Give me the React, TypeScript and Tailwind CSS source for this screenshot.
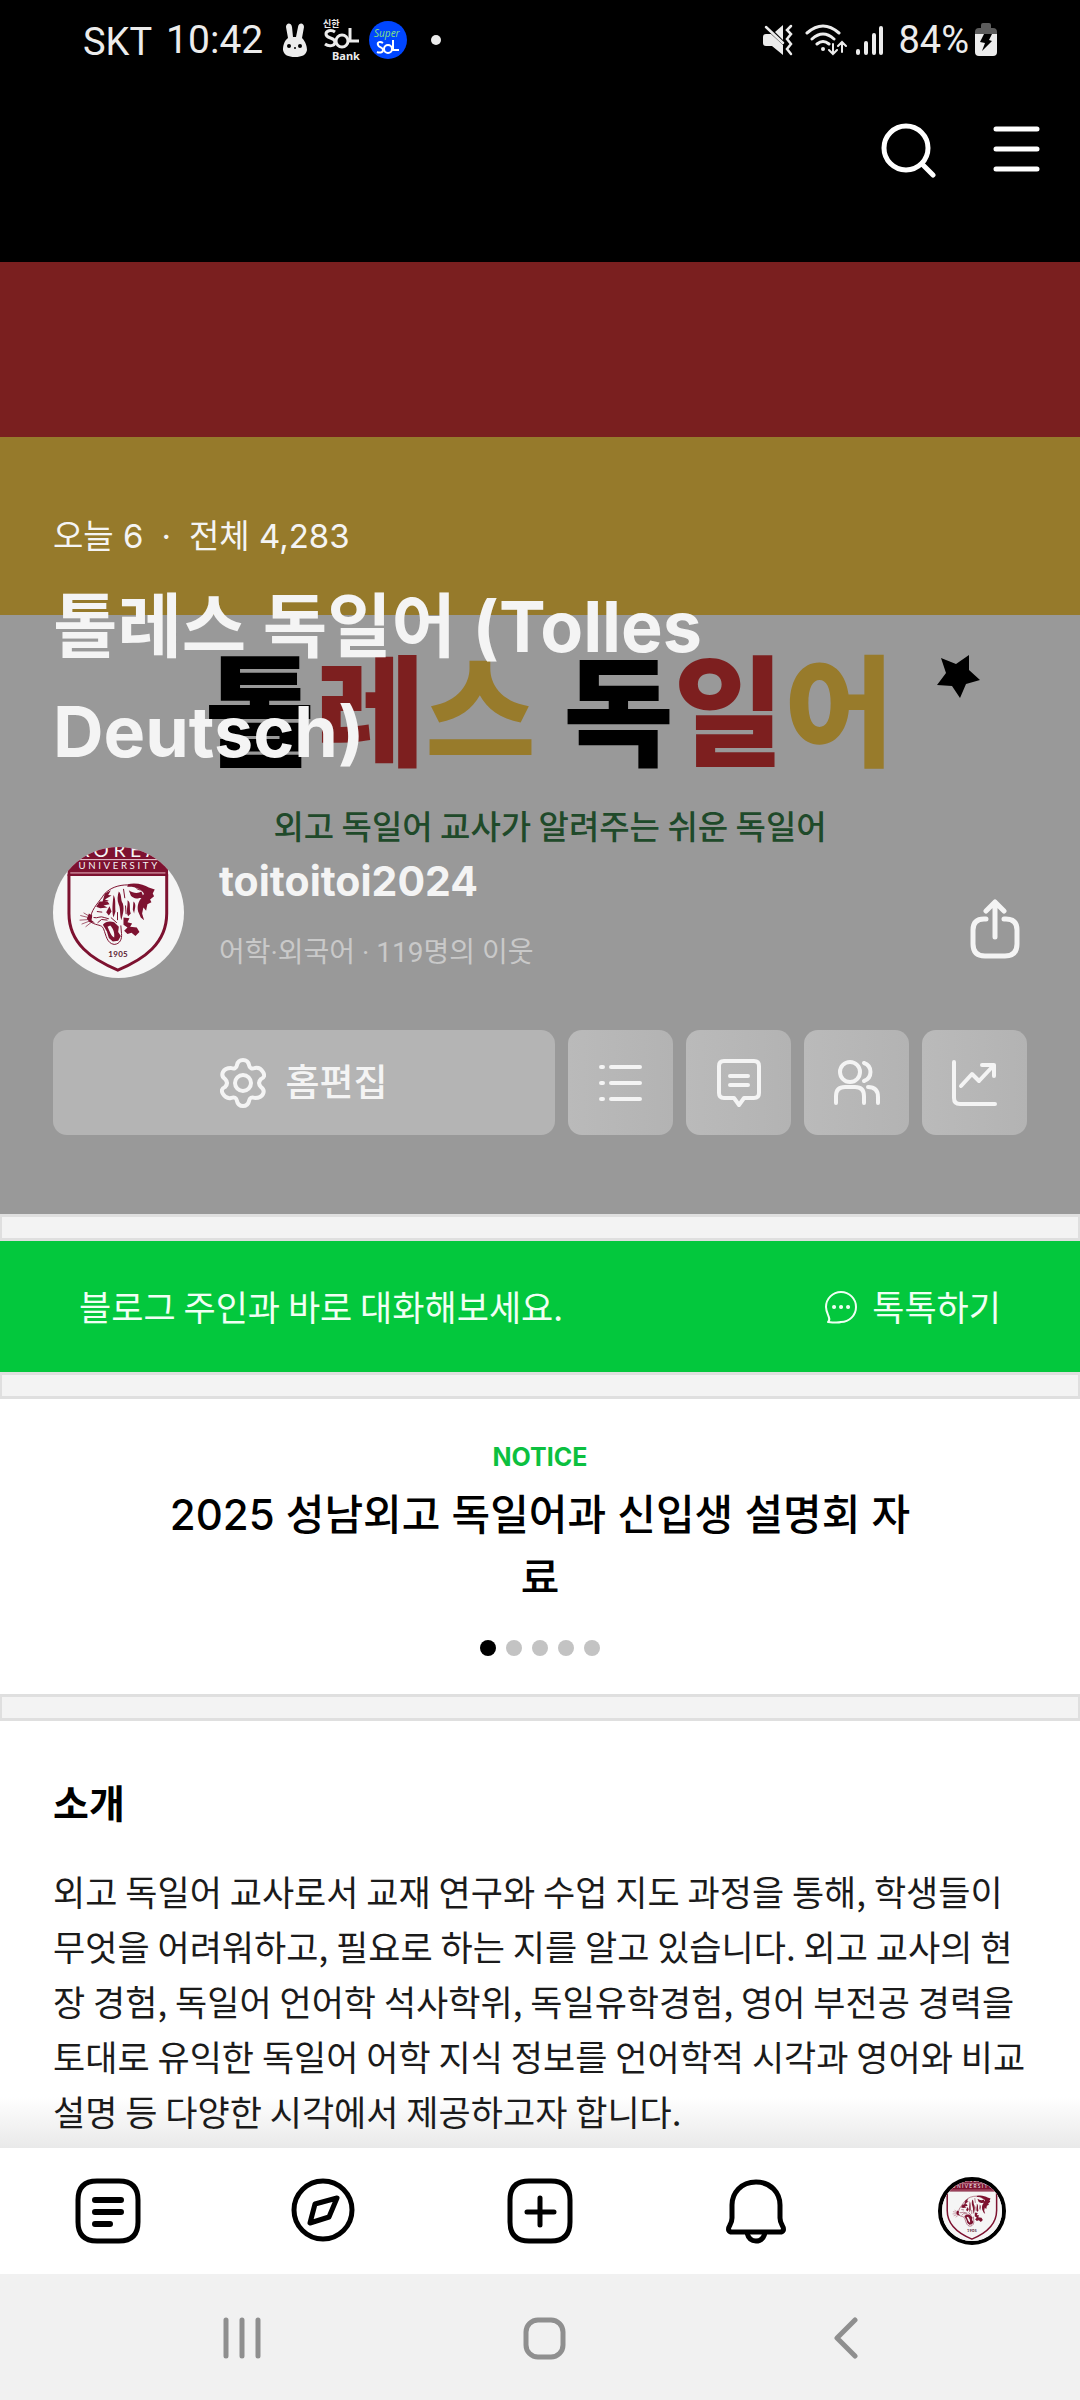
import type { ReactNode } from 'react'

const FONT = "font-[Inter,'Noto_Sans_CJK_KR',sans-serif]"
const KR_FONT = "font-['Noto_Sans_CJK_KR',sans-serif]"
const META_FONT = "font-[Roboto,'Noto_Sans_CJK_KR',sans-serif]"
const STATUS_FONT = 'font-[Roboto,sans-serif]'

interface IconProps {
  width: number
  height: number
  stroke?: number
  children: ReactNode
}

function Icon({ width, height, stroke = 4, children }: IconProps) {
  return (
    <svg
      width={width}
      height={height}
      viewBox={`0 0 ${width} ${height}`}
      fill="none"
      stroke="currentColor"
      strokeWidth={stroke}
      strokeLinecap="round"
      strokeLinejoin="round"
      className="shrink-0"
      aria-hidden="true"
    >
      {children}
    </svg>
  )
}

function Crest({ className, viewBox }: { className: string; viewBox: string }) {
  return (
    <svg viewBox={viewBox} className={className} role="img" aria-label="Korea University">
      <rect x="90" y="40" width="410" height="410" fill="#f5f5f5" />
      <path d="M142 40H444V137H142Z" fill="#7d1230" />
      <text x="300" y="80" textAnchor="middle" fontFamily="Lato" fontSize="58" letterSpacing="14" fill="#f5f5f5">
        KOREA
      </text>
      <path d="M150 88H436" stroke="#f0d5dc" strokeWidth="3" />
      <text x="297" y="117" textAnchor="middle" fontFamily="Lato" fontSize="29" letterSpacing="8" fill="#f5f5f5">
        UNIVERSITY
      </text>
      <path d="M150 128H436" stroke="#e9b9c5" strokeWidth="3" />
      <path d="M146 132V250C146 340 215 388 293 420C371 388 440 340 440 250V132" fill="none" stroke="#7d1230" strokeWidth="9" />
      <g fill="#7d1230">
        <path d="M322 162C350 156 372 164 386 172L404 178L398 190L402 198L390 208L394 216L382 222L378 242L370 232L366 250L372 270L362 262L354 244C350 226 356 212 364 204L352 202L372 192C366 176 342 168 322 170Z" />
        <path d="M326 180C340 190 354 190 364 184L368 194C356 210 340 206 332 196Z" />
        <path d="M296 184C306 194 300 208 308 220C314 240 306 258 304 270C298 256 302 236 296 224C290 210 292 196 296 184Z" />
        <path d="M280 194C288 206 284 228 286 244L280 262C274 242 278 214 280 194Z" />
        <path d="M322 210C334 216 326 236 332 250L324 258C316 244 324 226 322 210Z" />
        <path d="M340 214C350 222 344 236 342 250L338 238Z" />
        <path d="M254 190L272 180L264 194L274 196L254 208L266 212L246 218Z" />
        <path d="M238 214L262 214L268 222L250 226L262 232L240 234L228 230Z" />
        <path d="M268 228L274 244L266 256L258 246Z" />
        <path d="M310 262L328 264L322 276L336 280L330 290L350 292L358 306L346 318L334 308L322 312L312 302L322 292L310 284Z" />
        <path d="M248 284C256 274 268 272 282 276L296 290L294 306L302 318L294 332L278 334L266 324L260 304Z" />
        <path d="M206 250L216 256L214 270L224 278L208 276L200 266Z" />
      </g>
      <path d="M262 290C268 302 272 318 282 322C284 306 278 294 270 286Z" fill="#f5f5f5" />
      <g fill="none" stroke="#7d1230" strokeWidth="3">
        <path d="M212 258C216 234 238 214 252 192C270 172 296 164 322 164" />
        <path d="M212 276C232 288 244 282 250 296C258 316 260 340 282 343C300 342 306 326 304 310L302 286" />
        <path d="M220 262C232 266 240 256 252 262L266 266M230 244L246 246M232 278L244 268L262 270" />
        <path d="M212 264L180 256M210 268L178 270M210 272L184 282M214 262L190 248M214 276L196 290" strokeWidth="2" />
        <path d="M310 176L314 204M346 170C352 180 362 180 370 178M316 226L318 252M292 246L292 270M272 262L290 278" />
      </g>
      <text x="294" y="380" textAnchor="middle" fontFamily="Lato" fontWeight="700" fontSize="24" letterSpacing="1" fill="#5a2030">
        1905
      </text>
    </svg>
  )
}

function StatusBar() {
  return (
    <div className={`flex h-20 items-center justify-between px-[83px] text-[38px] text-[#ececec] ${STATUS_FONT}`}>
      <div className="flex items-center">
        <span className="pt-1">SKT</span>
        <span className="ml-[14px] text-[39px]">10:42</span>
        <svg width="24" height="34" viewBox="0 0 24 34" className="ml-5" aria-hidden="true">
          <path
            fill="currentColor"
            d="M3 4C3 0 8-1 9 4L10 14H13L15 4C16-1 21 0 21 4L19 15C23 19 24 24 24 27C23 32 19 34 12 34S1 32 0 27C0 23 1 18 5 15Z"
          />
          <circle cx="6" cy="23" r="2" />
          <circle cx="17" cy="23" r="2" />
          <circle cx="12" cy="25" r="1" />
        </svg>
        <svg width="40" height="44" viewBox="0 0 40 44" className="ml-4 overflow-visible" role="img" aria-label="신한 SOL Bank">
          <text x="0" y="9" fontFamily="Noto Sans CJK KR" fontWeight="700" fontSize="9" fill="#ececec">신한</text>
          <g fill="none" stroke="#ececec" strokeWidth="3">
            <path d="M12 14C8 11 3 13 3 16C3 21 12 19 12 24C12 28 6 29 2 26" />
            <circle cx="19" cy="23" r="6" />
            <path d="M27 10V23H36" />
          </g>
          <text x="9" y="42" fontFamily="Noto Sans" fontWeight="700" fontSize="11" fill="#ececec">Bank</text>
        </svg>
        <svg width="38" height="38" viewBox="0 0 38 38" className="ml-[6px]" role="img" aria-label="Super SOL">
          <circle cx="19" cy="19" r="19" fill="#0046ff" />
          <text x="5" y="16" fontFamily="Noto Sans" fontStyle="italic" fontSize="10" fill="#7ddc8a">Super</text>
          <g fill="none" stroke="#fff" strokeWidth="2">
            <path d="M14 22C11 20 8 21 9 24C10 27 14 26 14 29C14 32 10 32 8 31" />
            <circle cx="19" cy="28" r="4" />
            <path d="M24 19V29H30" />
          </g>
        </svg>
        <span className="ml-6 size-[10px] rounded-full bg-[#ececec]" />
      </div>
      <div className="flex items-center">
        <svg width="30" height="32" viewBox="0 0 30 32" aria-hidden="true">
          <path fill="currentColor" d="M0 13Q0 10 3 10H8L20 21V31L9 22H3Q0 22 0 19ZM12 8L20 1V16Z" />
          <path fill="none" stroke="currentColor" strokeWidth="2.5" strokeLinecap="round" d="M3 3L20 19M28 2L24 6L28 10L24 15L28 20L24 25L28 30" />
        </svg>
        <svg width="42" height="32" viewBox="0 0 42 32" className="ml-3" aria-hidden="true">
          <g fill="none" stroke="currentColor" strokeWidth="3" strokeLinecap="round">
            <path d="M2 9Q18-5 34 9M7 15Q18 5 29 15M12 20Q18 15 24 20" />
            <path strokeWidth="2" d="M28 20V30M24 26L28 30L32 26M37 28V18M33 22L37 18L41 22" />
          </g>
          <circle cx="18" cy="25" r="2" fill="currentColor" />
        </svg>
        <svg width="29" height="30" viewBox="0 0 29 30" className="ml-2" aria-hidden="true">
          <path stroke="currentColor" strokeWidth="4" strokeLinecap="round" d="M3 26V28M11 18V28M19 10V28M26 3V28" />
        </svg>
        <span className="ml-[14px]">84%</span>
        <svg width="22" height="34" viewBox="0 0 22 34" className="ml-[6px]" aria-hidden="true">
          <path fill="#5c5c5c" d="M6 5V2Q6 0 8 0H14Q16 0 16 2V5H18Q22 5 22 9V12H0V9Q0 5 4 5Z" />
          <path fill="currentColor" d="M0 11H22V29Q22 33 18 33H4Q0 33 0 29Z" />
          <path fill="#000" d="M9 11H17L14 17L17 18L7 28L10 20L5 19Z" />
        </svg>
      </div>
    </div>
  )
}

function CoverBackdrop() {
  return (
    <div className={`absolute inset-0 flex flex-col ${KR_FONT}`} aria-hidden="true">
      <div className="h-[262px] bg-black" />
      <div className="h-[175px] bg-[#7a1f1f]" />
      <div className="h-[178px] bg-[#967a2b]" />
      <div className="flex flex-1 flex-col items-center bg-[#999999] pt-7">
        <div className="flex items-start">
          <p className="ml-[106px] text-[120px] leading-[124px] font-black whitespace-nowrap text-black">
            톨<span className="text-[#7d1f1f]">레</span>
            <span className="text-[#987b2b]">스</span> 독<span className="text-[#7d1f1f]">일</span>
            <span className="text-[#987b2b]">어</span>
          </p>
          <svg width="44" height="44" viewBox="0 0 44 44" className="mt-3 ml-[43px]">
            <path d="M4 3L19 9L32 0L32 15L43 25L29 29L23 43L15 31L0 30L9 18Z" />
          </svg>
        </div>
        <p className="mt-[34px] ml-5 text-[33px] leading-[48px] font-medium text-[#1f4a2a]">
          외고 독일어 교사가 알려주는 쉬운 독일어
        </p>
      </div>
    </div>
  )
}

const coverActions = [
  {
    label: '목록',
    icon: (
      <Icon width={44} height={48}>
        <path d="M2 8H4M12 8H41M2 24H4M12 24H41M2 40H4M12 40H41" />
      </Icon>
    ),
  },
  {
    label: '안부글',
    icon: (
      <Icon width={44} height={48}>
        <path d="M7 2H37Q42 2 42 7V34Q42 39 37 39H27L22 46L17 39H7Q2 39 2 34V7Q2 2 7 2ZM13 17H31M13 26H31" />
      </Icon>
    ),
  },
  {
    label: '이웃',
    icon: (
      <Icon width={46} height={46}>
        <circle cx="16" cy="12" r="10" />
        <path d="M2 43V36Q2 27 11 27H21Q30 27 30 36V43M30 3A9.500 9.500 0 0 1 30 21M34 27Q44 27 44 37V43" />
      </Icon>
    ),
  },
  {
    label: '통계',
    icon: (
      <Icon width={46} height={48}>
        <path d="M2 3V39Q2 45 8 45H43M9 27L20 15L27 22L42 6M30 6H42V17" />
      </Icon>
    ),
  },
]

function Cover() {
  return (
    <section className="relative">
      <CoverBackdrop />
      <div className="relative text-[#f4f4f4]">
        <StatusBar />
        <header className="flex items-center justify-end gap-[57px] pt-10 pr-10">
          <button type="button" aria-label="검색" className="text-white">
            <Icon width={56} height={58} stroke={5}>
              <circle cx="26" cy="28" r="22" />
              <path d="M42 44L53 55" />
            </Icon>
          </button>
          <button type="button" aria-label="메뉴" className="text-white">
            <Icon width={47} height={46} stroke={5}>
              <path d="M3 3H44M3 23H44M3 43H44" />
            </Icon>
          </button>
        </header>

        <div className="px-[53px] pt-[334px] pb-[79px]">
          <p className="text-[33px] leading-[48px]">
            오늘 6<span className="mx-[18px]">·</span>전체 4,283
          </p>
          <h1 className="mt-[14px] max-w-[760px] text-[70px] leading-[105px] font-bold">
            톨레스 독일어 (Tolles Deutsch)
          </h1>

          <div className="mt-[63px] flex items-center">
            <Crest viewBox="98 50 394 394" className="size-[131px] rounded-full" />
            <div className="ml-[35px] flex-1 pt-2">
              <p className="text-[41px] leading-[48px] font-bold">toitoitoi2024</p>
              <p className={`mt-6 text-[28px] leading-[48px] text-[#c9c9c9] ${META_FONT}`}>
                어학·외국어 · 119명의 이웃
              </p>
            </div>
            <button type="button" aria-label="공유" className="mt-8 mr-[7px]">
              <Icon width={50} height={60} stroke={5}>
                <path d="M16 20H14Q3 20 3 31V45Q3 57 15 57H35Q47 57 47 45V31Q47 20 36 20H34M25 38V3M16 12L25 3L34 12" />
              </Icon>
            </button>
          </div>

          <div className="mt-[52px] flex gap-[13px]">
            <button
              type="button"
              className="flex h-[105px] flex-1 items-center justify-center gap-[19px] rounded-[14px] bg-[#b4b4b4] text-[37px] font-medium"
            >
              <Icon width={46} height={50}>
                <path d="M17 7Q18 2 23 2T29 7Q30 12 35 10Q40 9 43 14T41 21Q37 25 41 29Q45 32 43 36T35 40Q30 38 29 43Q28 48 23 48T17 43Q16 38 11 40Q6 41 3 36T5 29Q9 25 5 21Q1 18 3 14T11 10Q16 12 17 7Z" />
                <circle cx="23" cy="25" r="8" />
              </Icon>
              홈편집
            </button>
            {coverActions.map((action) => (
              <button
                key={action.label}
                type="button"
                aria-label={action.label}
                className="flex size-[105px] items-center justify-center rounded-[14px] bg-linear-to-r from-[#bababa] to-[#b3b3b3]"
              >
                {action.icon}
              </button>
            ))}
          </div>
        </div>
      </div>
    </section>
  )
}

function Divider() {
  return <div className="h-[27px] border-x-2 border-y-3 border-[#dfdfdf] bg-[#f3f3f3]" />
}

function TalkBanner() {
  return (
    <section className={`flex h-[131px] items-center justify-between bg-[#03c83d] px-[79px] text-[35px] text-[#f0fff4] ${KR_FONT}`}>
      <p>블로그 주인과 바로 대화해보세요.</p>
      <a href="#talk" className="flex items-center gap-[14px]">
        <Icon width={34} height={34} stroke={2}>
          <path d="M4 32C8 29 2 24 2 17A15 15 0 1 1 17 32Q14 33 4 32Z" />
          <path strokeWidth="4" d="M10 17H10.100M17 17H17.100M24 17H24.100" />
        </Icon>
        톡톡하기
      </a>
    </section>
  )
}

function Notice() {
  const pages = [0, 1, 2, 3, 4]

  return (
    <section className="flex flex-col items-center px-[156px] pt-10 pb-[38px] text-center">
      <p className="text-[25px] leading-9 font-bold text-[#0cc03f]">NOTICE</p>
      <h2 className="mt-2 text-[42px] leading-[63px] font-medium text-black">
        2025 성남외고 독일어과 신입생 설명회 자료
      </h2>
      <div className="mt-[31px] flex gap-[10px]">
        {pages.map((page) => (
          <span key={page} className={`size-4 rounded-full ${page === 0 ? 'bg-black' : 'bg-[#c3c3c3]'}`} />
        ))}
      </div>
    </section>
  )
}

function Intro() {
  return (
    <section className={`bg-linear-to-t from-[#e9e9e9] via-white via-12% to-white px-[53px] pt-[52px] pb-[10px] ${KR_FONT}`}>
      <h2 className="text-[39px] leading-[56px] font-bold text-black">소개</h2>
      <p className="mt-[34px] text-[35px] leading-[55px] text-[#1b1b1b]">
        외고 독일어 교사로서 교재 연구와 수업 지도 과정을 통해, 학생들이 무엇을 어려워하고, 필요로 하는 지를 알고 있습니다.
        외고 교사의 현장 경험, 독일어 언어학 석사학위, 독일유학경험, 영어 부전공 경력을 토대로 유익한 독일어 어학 지식 정보를
        언어학적 시각과 영어와 비교 설명 등 다양한 시각에서 제공하고자 합니다.
      </p>
    </section>
  )
}

const squircle = 'M22 3H44Q63 3 63 22V44Q63 63 44 63H22Q3 63 3 44V22Q3 3 22 3Z'

const tabs = [
  {
    label: '이웃새글',
    icon: (
      <Icon width={66} height={66} stroke={5}>
        <path d={squircle} />
        <path strokeWidth="6" d="M20 22H46M20 34H46M20 46H35" />
      </Icon>
    ),
  },
  {
    label: '추천',
    icon: (
      <Icon width={66} height={66} stroke={5}>
        <circle cx="32" cy="32" r="29" />
        <path d="M46 20L24 26L19 45L38 39Z" />
      </Icon>
    ),
  },
  {
    label: '글쓰기',
    icon: (
      <Icon width={66} height={66} stroke={5}>
        <path d={squircle} />
        <path d="M33 20V47M20 34H47" />
      </Icon>
    ),
  },
  {
    label: '알림',
    icon: (
      <Icon width={66} height={66} stroke={5}>
        <path d="M33 4C18 4 9 15 9 27V40Q9 43 7 47C4 52 6 54 9 54H57C60 54 62 52 59 47Q57 43 57 40V27C57 15 48 4 33 4ZM24 55Q26 63 33 63T42 55" />
      </Icon>
    ),
  },
  {
    label: '내 블로그',
    icon: <Crest viewBox="115 74 357 357" className="size-[68px] rounded-full border-4 border-black" />,
  },
]

function TabBar() {
  return (
    <nav className="flex h-[126px] bg-white text-black">
      {tabs.map((tab) => (
        <button key={tab.label} type="button" aria-label={tab.label} className="flex flex-1 items-center justify-center">
          {tab.icon}
        </button>
      ))}
    </nav>
  )
}

function SystemNav() {
  return (
    <nav className="flex h-[126px] bg-[#f1f1f1] pt-[2px] pr-[83px] pl-[91px] text-[#8f8f8f]">
      <button type="button" aria-label="최근 앱" className="flex flex-1 items-center justify-center">
        <Icon width={38} height={42} stroke={5}>
          <path d="M3 3V39M19 3V39M35 3V39" />
        </Icon>
      </button>
      <button type="button" aria-label="홈" className="flex flex-1 items-center justify-center">
        <Icon width={43} height={43} stroke={5}>
          <rect x="3" y="3" width="37" height="37" rx="12" />
        </Icon>
      </button>
      <button type="button" aria-label="뒤로" className="flex flex-1 items-center justify-center">
        <Icon width={24} height={42} stroke={5}>
          <path d="M21 3L3 21L21 39" />
        </Icon>
      </button>
    </nav>
  )
}

export default function App() {
  return (
    <div className={`w-full bg-white ${FONT}`}>
      <Cover />
      <Divider />
      <TalkBanner />
      <Divider />
      <Notice />
      <Divider />
      <Intro />
      <TabBar />
      <SystemNav />
    </div>
  )
}
